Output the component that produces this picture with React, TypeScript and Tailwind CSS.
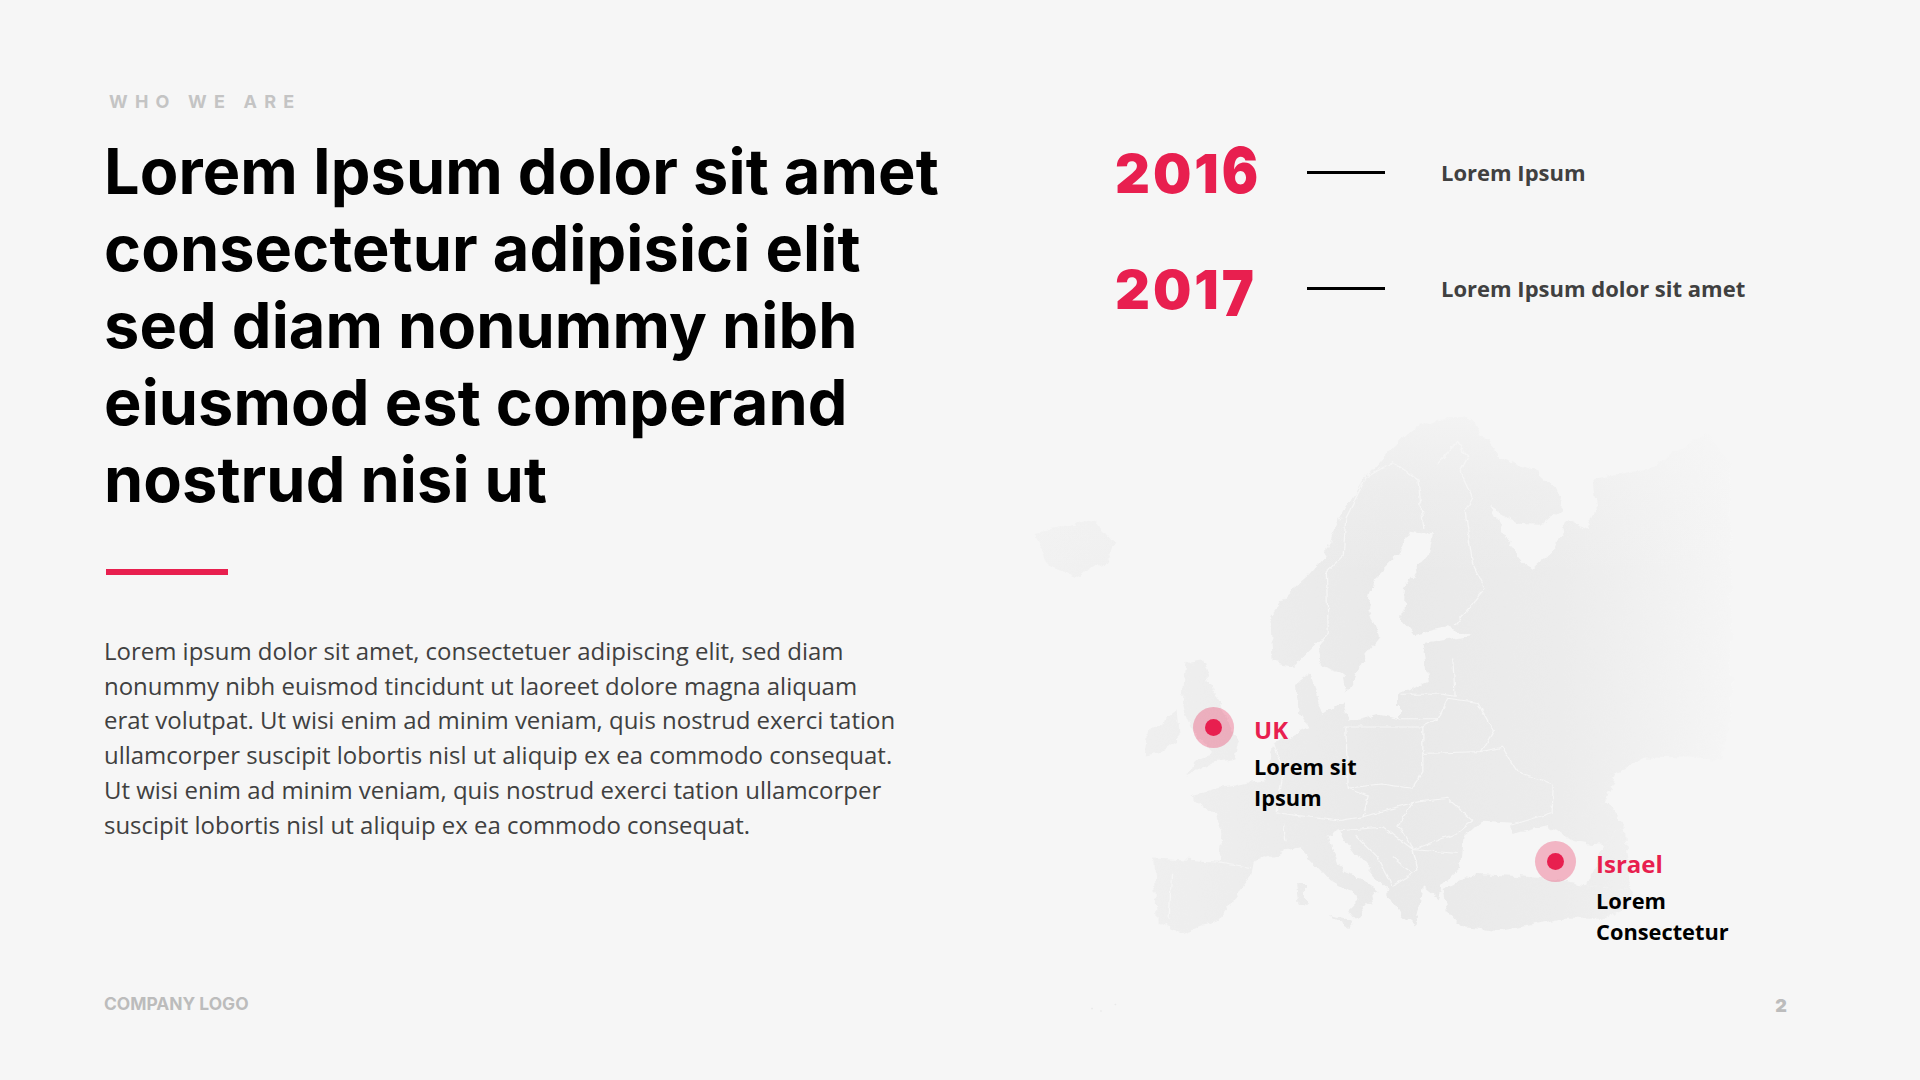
function EuropeMap() {
  const bg = "#f6f6f6";
  return (
    <svg className="absolute left-[1000px] top-[380px] w-[780px] h-[640px]" viewBox="0 0 1568 1568" preserveAspectRatio="none">
      <defs>
        <linearGradient id="land" gradientUnits="userSpaceOnUse" x1="0" y1="0" x2="1568" y2="0">
          <stop offset="0" stopColor="#f2f2f2" />
          <stop offset="0.25" stopColor="#eeeeee" />
          <stop offset="0.5" stopColor="#e9e9e9" />
          <stop offset="0.72" stopColor="#ececec" />
          <stop offset="0.935" stopColor="#f5f5f5" />
        </linearGradient>
        <linearGradient id="north" x1="0" y1="0" x2="0" y2="1">
          <stop offset="0" stopColor="#f6f6f6" stopOpacity="0.95" />
          <stop offset="0.35" stopColor="#f6f6f6" stopOpacity="0.25" />
          <stop offset="0.6" stopColor="#f6f6f6" stopOpacity="0" />
          <stop offset="1" stopColor="#f6f6f6" stopOpacity="0" />
        </linearGradient>
        <filter id="rough" x="-5%" y="-5%" width="110%" height="110%">
          <feTurbulence type="fractalNoise" baseFrequency="0.035" numOctaves="4" seed="7" result="n" />
          <feDisplacementMap in="SourceGraphic" in2="n" scale="22" xChannelSelector="R" yChannelSelector="G" />
        </filter>
        <filter id="wiggle" x="-5%" y="-5%" width="110%" height="110%">
          <feTurbulence type="fractalNoise" baseFrequency="0.06" numOctaves="2" seed="3" result="n" />
          <feDisplacementMap in="SourceGraphic" in2="n" scale="10" xChannelSelector="R" yChannelSelector="G" />
        </filter>
      </defs>
      <g filter="url(#rough)">
        <g fill="url(#land)">
          <path d="M550 690 L545 575 L575 530 L620 480 L650 440 L668 380 L695 320 L735 240 L770 190 L820 130 L880 95 L935 92 L965 130 L1005 190 L1080 225 L1130 285 L1125 320 L1090 352 L1040 350 L985 310 L1005 350 L1030 410 L1070 465 L1110 420 L1140 345 L1180 370 L1200 320 L1190 240 L1300 220 L1420 130 L1468 200 L1468 840 L1450 930 L1300 925 L1240 960 L1220 1030 L1255 1090 L1215 1140 L1150 1130 L1100 1090 L1030 1115 L1030 1085 L970 1080 L930 1120 L925 1195 L890 1235 L880 1270 L850 1240 L835 1340 L795 1295 L772 1240 L722 1170 L682 1105 L660 1115 L680 1190 L762 1250 L745 1278 L715 1322 L700 1300 L725 1270 L660 1225 L600 1145 L510 1180 L505 1210 L440 1320 L365 1355 L315 1330 L310 1170 L440 1180 L445 1110 L430 1060 L385 1020 L440 1000 L530 980 L550 890 L620 850 L600 810 L595 745 L625 720 L640 790 L650 820 L700 780 L690 720 L645 700 L640 640 L590 700 Z" />
          <path d="M375 690 L405 685 L425 750 L445 800 L482 890 L475 930 L425 940 L375 972 L395 930 L425 915 L400 880 L385 850 L365 790 Z" />
          <path d="M300 855 L355 810 L360 885 L325 910 L295 920 Z" />
          <path d="M892 1245 L960 1210 L1040 1215 L1130 1225 L1180 1240 L1270 1250 L1265 1290 L1210 1320 L1130 1320 L1070 1335 L1000 1350 L930 1340 L900 1300 Z" />
          <path d="M70 375 L110 365 L190 345 L232 400 L205 450 L150 482 L95 455 Z" />
          <path d="M595 1235 L615 1235 L615 1280 L600 1285 Z" />
          <path d="M662 1310 L710 1325 L700 1340 Z" />
          <path d="M1215 1140 L1180 1240 L1270 1250 L1255 1090 Z" />
        </g>
        <g fill={bg}>
          <path d="M820 372 L870 378 L862 430 L812 510 L808 590 L830 622 L900 606 L950 625 L850 650 L860 740 L800 770 L800 830 L760 820 L700 840 L690 790 L730 680 L762 630 L740 560 L752 490 L800 430 Z" />
        </g>
      </g>
      <rect width="1568" height="800" fill="url(#north)" />
      <g fill="none" stroke={bg} strokeWidth="2.5" strokeLinejoin="round" filter="url(#wiggle)">
        <path d="M640 650 L660 620 L656 470 L690 430 L695 340 L735 240 L790 200 L840 245 L852 365" />
        <path d="M880 205 L920 150 L940 190 L925 225 L950 290 L935 320 L950 450 L975 510 L915 600" />
        <path d="M690 850 L850 850 L850 960 L828 1000 L765 990 L700 1000 L695 850" />
        <path d="M850 850 L880 830 L900 780 L960 790 L992 860 L968 910 L850 915" />
        <path d="M968 910 L1010 900 L1040 960 L1112 990 L1110 1060 L1030 1090" />
        <path d="M805 770 L890 770 L915 775 L910 680 M800 830 L880 830" />
        <path d="M830 1035 L900 1025 L950 1080 L920 1110 L830 1150 L800 1090 L830 1035" />
        <path d="M555 1060 L570 960 L550 890 M555 1060 L680 1080 L730 1070 L830 1035 M700 1000 L740 1020 L730 1070" />
        <path d="M680 1105 L770 1095 L830 1150 L840 1200 L790 1240 L760 1170 L715 1115 M790 1170 L830 1210 M830 1150 L920 1160" />
        <path d="M575 1130 L570 1090 M345 1210 L340 1320 M440 1180 L505 1195" />
      </g>
      <g fill="#e9e9e9">
        <circle cx="185" cy="1540" r="2" />
        <circle cx="203" cy="1546" r="2" />
        <circle cx="232" cy="1530" r="2" />
      </g>
    </svg>
  );
}

function Pin({ className, title, lines }: { className: string; title: string; lines: string[] }) {
  return (
    <div className={"absolute flex items-start gap-[20px] " + className}>
      <div className="w-[41px] h-[41px] rounded-full bg-[#e81f4f]/30 flex items-center justify-center">
        <div className="w-[17px] h-[17px] rounded-full bg-[#e81f4f]" />
      </div>
      <div className="pt-[6px] font-['Open_Sans'] font-bold">
        <div className="text-[24px] leading-[33px] text-[#e81f4f]">{title}</div>
        <div className="mt-[5px] text-[21.8px] leading-[31px] text-black">
          {lines.map((l) => (
            <div key={l}>{l}</div>
          ))}
        </div>
      </div>
    </div>
  );
}

function Year({ a, b }: { a: string; b: string }) {
  return (
    <div className="w-[192px] pt-[3px] font-['Inter'] font-black text-[54px] leading-[64px] tracking-[3px] text-[#e81f4f]">
      {a}
      <span className={b === "6" ? "inline-block origin-[50%_52px] scale-y-[1.18]" : "inline-block origin-[50%_13px] scale-y-[1.18]"}>{b}</span>
    </div>
  );
}

function Row({ a, b, label }: { a: string; b: string; label: string }) {
  return (
    <div className="flex items-center h-[64px]">
      <Year a={a} b={b} />
      <div className="w-[78px] h-[3px] bg-black" />
      <div className="ml-[56px] font-['Open_Sans'] font-bold text-[22px] text-[#404040]">{label}</div>
    </div>
  );
}

export default function App() {
  return (
    <div className="relative w-[1920px] h-[1080px] overflow-hidden bg-[#f6f6f6] flex flex-col">
      <EuropeMap />
      <Pin className="left-[1193px] top-[707px]" title="UK" lines={["Lorem sit", "Ipsum"]} />
      <Pin className="left-[1535px] top-[841px]" title="Israel" lines={["Lorem", "Consectetur"]} />
      <main className="relative flex-1 flex pl-[104px] pt-[91px]">
        <section className="w-[1011px]">
          <div className="pl-[5px] font-['Inter'] font-bold text-[18px] leading-[22px] tracking-[7.2px] text-[#c4c4c4]">WHO WE ARE</div>
          <h1 className="mt-[20px] font-['Inter'] font-bold text-[63px] leading-[77px] tracking-[0.1px] text-black">
            Lorem Ipsum dolor sit amet
            <br />
            consectetur adipisici elit
            <br />
            sed diam nonummy nibh
            <br />
            eiusmod est comperand
            <br />
            nostrud nisi ut
          </h1>
          <div className="mt-[51px] ml-[2px] w-[122px] h-[6px] bg-[#e81f4f]" />
          <p className="mt-[59px] font-['Open_Sans'] text-[23.97px] leading-[34.7px] text-[#404040]">
            Lorem ipsum dolor sit amet, consectetuer adipiscing elit, sed diam
            <br />
            nonummy nibh euismod tincidunt ut laoreet dolore magna aliquam
            <br />
            erat volutpat. Ut wisi enim ad minim veniam, quis nostrud exerci tation
            <br />
            ullamcorper suscipit lobortis nisl ut aliquip ex ea commodo consequat.
            <br />
            Ut wisi enim ad minim veniam, quis nostrud exerci tation ullamcorper
            <br />
            suscipit lobortis nisl ut aliquip ex ea commodo consequat.
          </p>
        </section>
        <section className="pt-[49px] flex flex-col gap-[52px]">
          <Row a="201" b="6" label="Lorem Ipsum" />
          <Row a="201" b="7" label="Lorem Ipsum dolor sit amet" />
        </section>
      </main>
      <footer className="relative flex justify-between items-center pl-[104px] pr-[133px] pb-[63px] font-['Inter'] font-bold text-[#bcbcbc]">
        <div className="text-[17.4px] leading-[22px]">COMPANY LOGO</div>
        <div className="text-[18px] leading-[22px] font-black pt-[4px]">2</div>
      </footer>
    </div>
  );
}
